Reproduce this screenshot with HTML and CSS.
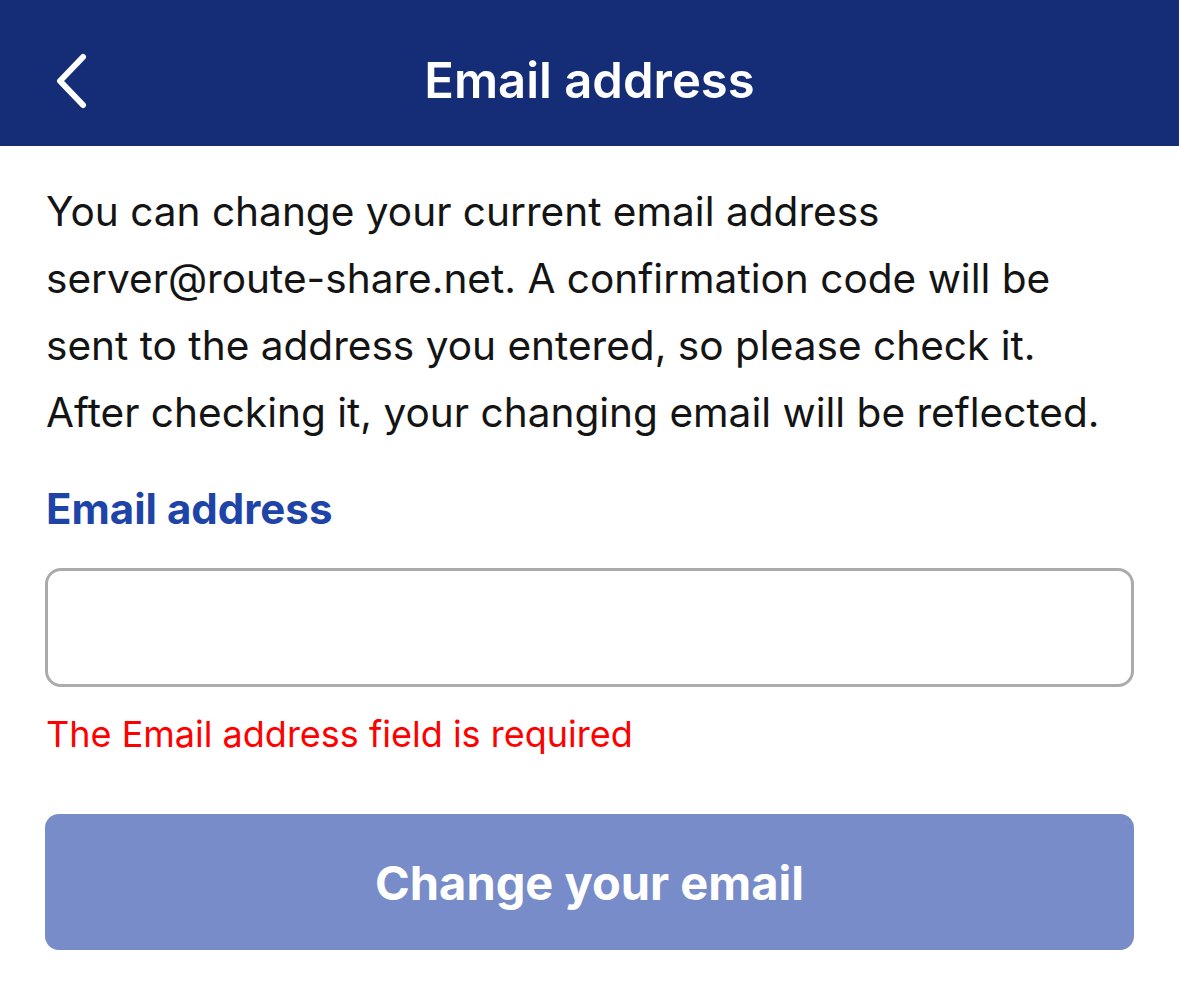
FILE: index.html
```html
<!DOCTYPE html>
<html>
<head>
<meta charset="utf-8">
<link rel="stylesheet" href="styles.css">
</head>
<body>
<header class="topbar">
  <button class="back" aria-label="Back">
    <svg width="40" height="60" viewBox="0 0 40 60"><path d="M30 6 L7 30 L30 54" fill="none" stroke="#fff" stroke-width="6" stroke-linecap="round" stroke-linejoin="round"/></svg>
  </button>
  <h1 class="title">Email address</h1>
</header>
<main class="content">
  <p class="intro">You can change your current email address<br>server@route-share.net. A confirmation code will be sent to the address you entered, so please check it. After checking it, your changing email will be reflected.</p>
  <label class="label" for="email">Email address</label>
  <input class="field" id="email" type="email">
  <p class="error">The Email address field is required</p>
  <button class="submit">Change your email</button>
</main>
</body>
</html>
```
FILE: styles.css
```css
* { box-sizing: border-box; }
body {
  margin: 0;
  background: #fff;
  font-family: Inter, "Noto Sans", sans-serif;
  color: #111;
}
.topbar {
  height: 146px;
  background: #142d76;
  display: flex;
  align-items: center;
  justify-content: center;
  position: relative;
  padding-top: 14px;
}
.back {
  position: absolute;
  left: 53px;
  top: 51px;
  background: none;
  border: 0;
  padding: 0;
  display: flex;
}
.title {
  margin: 0;
  color: #fff;
  font-size: 49px;
  font-weight: 600;
  letter-spacing: 0;
}
.content {
  padding: 32px 45px 0 45px;
  display: flex;
  flex-direction: column;
}
.intro {
  margin: 0 0 0 1px;
  font-size: 40.6px;
  line-height: 67px;
  color: #141414;
}
.label {
  margin: 38px 0 0 1px;
  font-size: 42px;
  line-height: 50px;
  font-weight: 700;
  color: #1e44a8;
}
.field {
  margin-top: 34px;
  height: 119px;
  border: 3px solid #ababab;
  border-radius: 16px;
  background: #fff;
  width: 100%;
}
.error {
  margin: 27px 0 0 1px;
  font-size: 36px;
  line-height: 40px;
  color: #ff0000;
}
.submit {
  margin-top: 60px;
  height: 136px;
  border: 0;
  border-radius: 14px;
  background: #778cc9;
  color: #fff;
  font-family: Inter, "Noto Sans", sans-serif;
  font-size: 47px;
  font-weight: 700;
  width: 100%;
}
```
